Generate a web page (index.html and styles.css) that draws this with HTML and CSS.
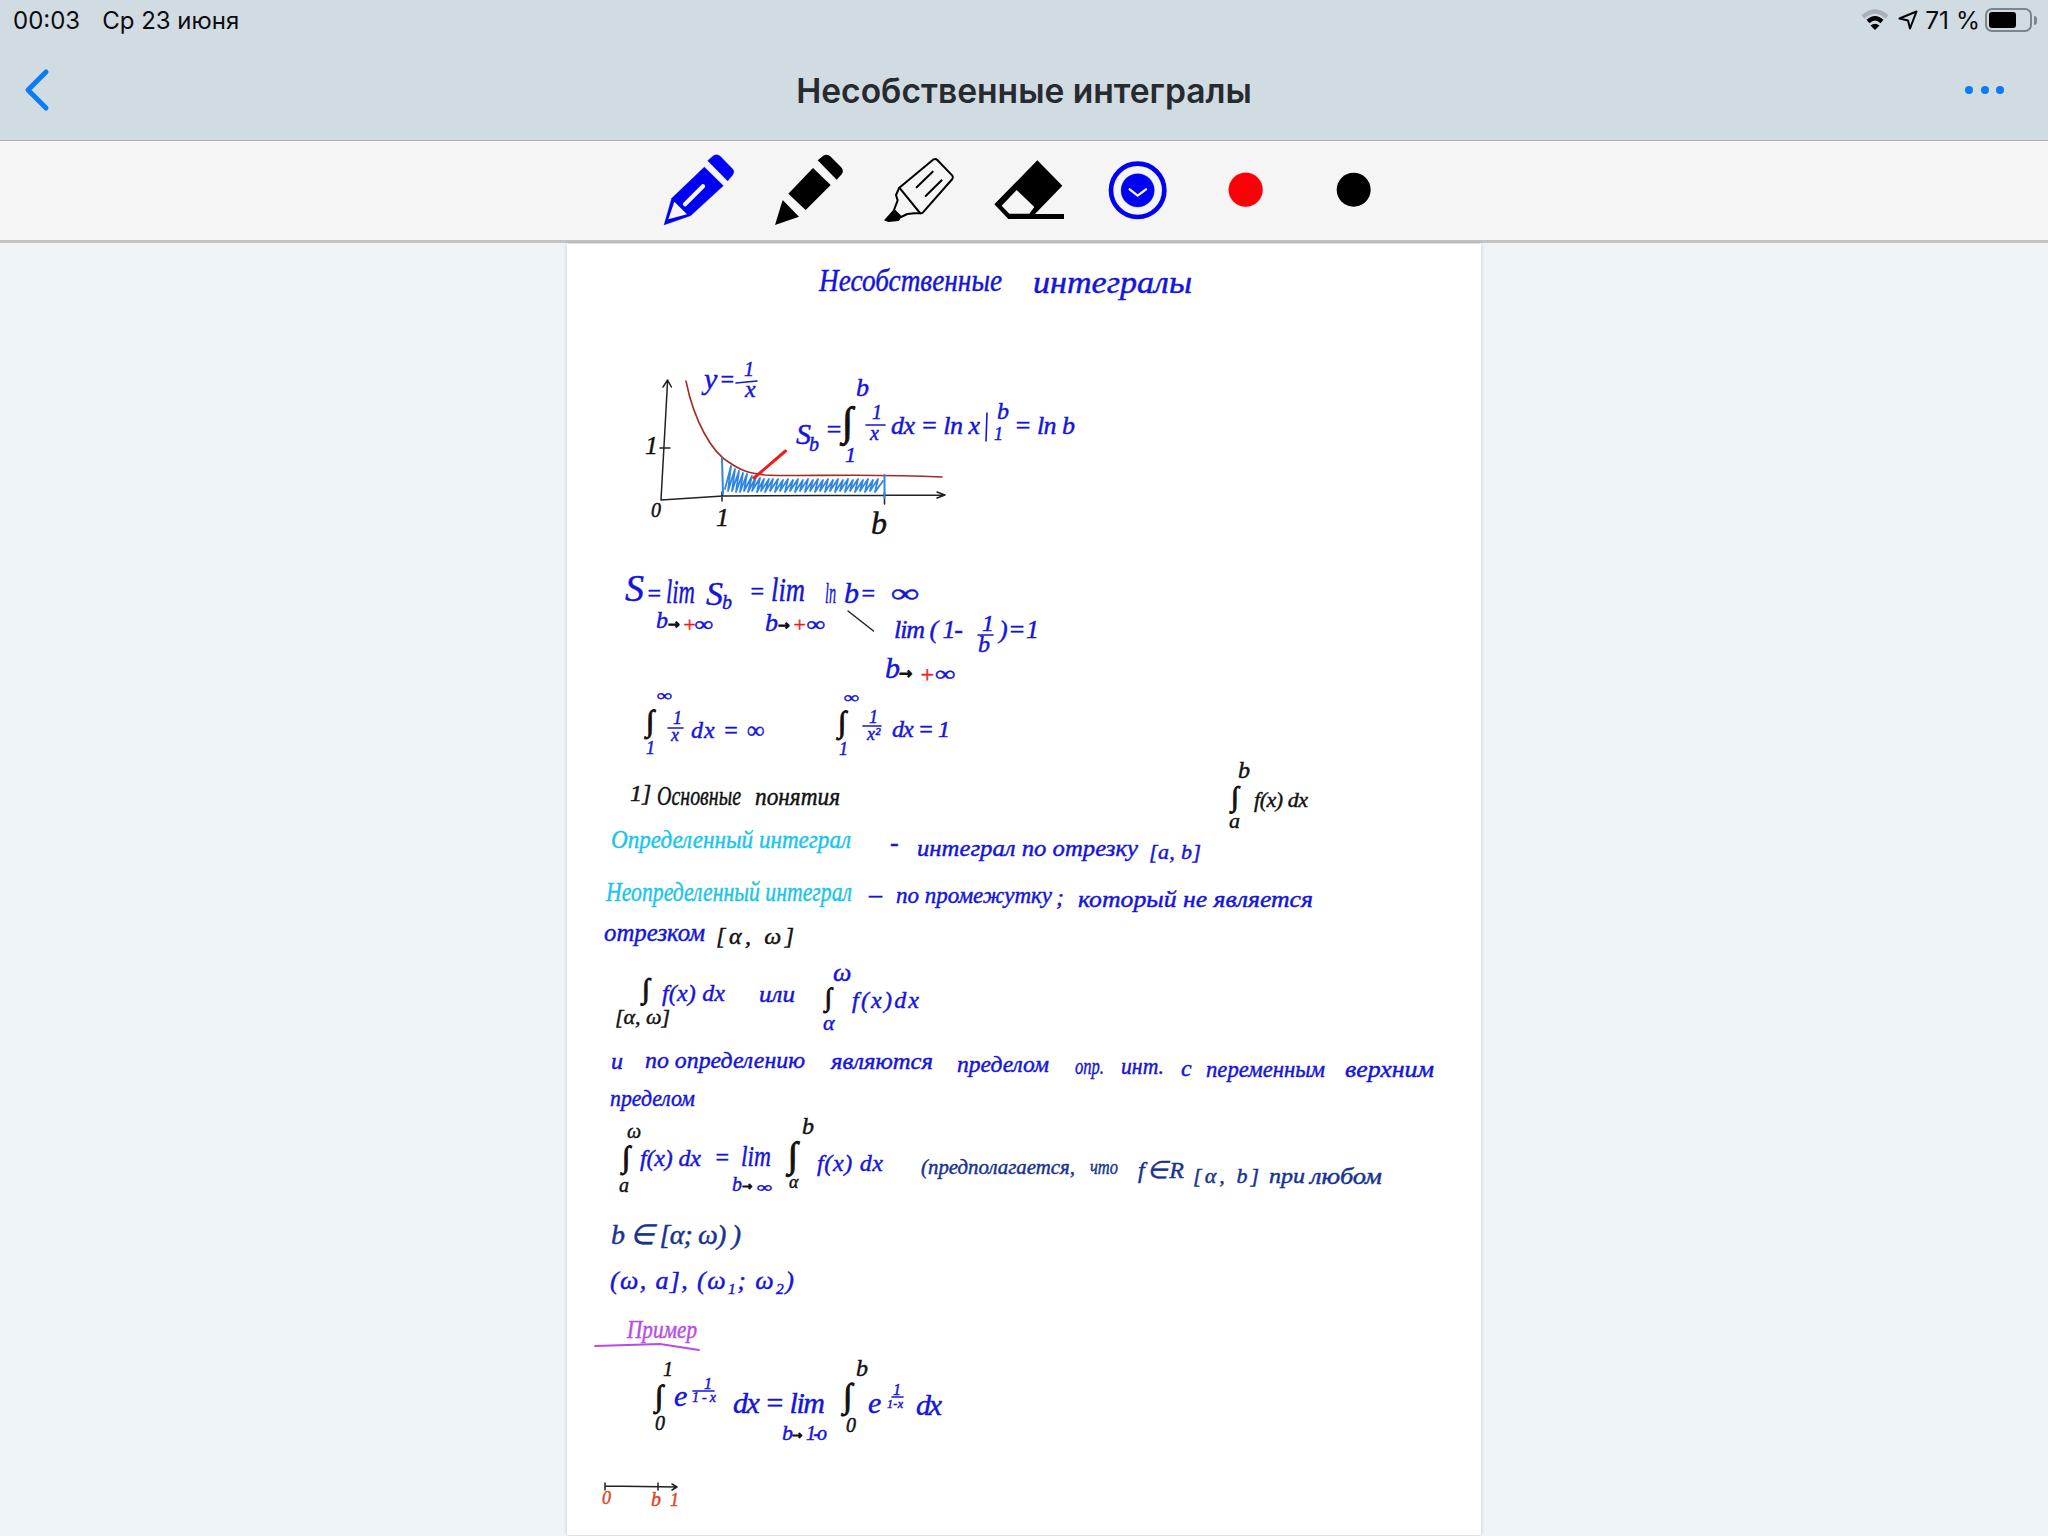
FILE: index.html
```html
<!DOCTYPE html>
<html lang="ru">
<head>
<meta charset="utf-8">
<title>Несобственные интегралы</title>
<link rel="stylesheet" href="styles.css">
</head>
<body>
<div class="app">
  <header class="top">
    <div class="status">
      <div class="status-left"><span>00:03</span><span>Ср 23 июня</span></div>
      <div class="status-right">
        <svg class="wifi" width="28" height="22" viewBox="0 0 28 22" aria-hidden="true">
          <path class="wifi-off" d="M2 8 Q14 -3 26 8"/>
          <path class="wifi-on" d="M7 12.5 Q14 6 21 12.5"/>
          <path class="wifi-dot" d="M14 21 L9.5 16.5 Q14 13 18.5 16.5 Z"/>
        </svg>
        <svg class="loc" width="20" height="20" viewBox="0 0 20 20" aria-hidden="true">
          <path d="M18.5 1.5 L1.5 8.5 L10 10.5 L12 18.5 Z"/>
        </svg>
        <span class="pct">71 %</span>
        <div class="battery"><div class="battery-level"></div></div>
        <div class="battery-nub"></div>
      </div>
    </div>
    <div class="nav">
      <svg class="back" width="28" height="44" viewBox="0 0 28 44" aria-hidden="true">
        <path d="M22 4 L4 22 L22 40"/>
      </svg>
      <h1 class="title">Несобственные интегралы</h1>
      <div class="more"><i></i><i></i><i></i></div>
    </div>
  </header>

  <div class="tools">
    <svg class="tool" viewBox="-9 0 324 270" aria-hidden="true">
      <path class="blue" d="M158 47 L175 32 Q185 26 195 33 L233 72 Q240 80 233 90 L218 108 Z"/>
      <path class="blue" d="M148 66 L205 122 L107 212 L27 240 L50 160 Z"/>
      <path class="hole" d="M58 170 L40 223 L96 208 Z"/>
      <path class="slot" d="M90 178 L144 124"/>
    </svg>
    <svg class="tool" viewBox="315 0 324 270" aria-hidden="true">
      <path d="M488 46 L505 32 Q515 26 525 33 L560 68 Q567 78 560 88 L545 104 Z"/>
      <path d="M474 69 L527 120 L452 195 L400 146 Z"/>
      <path d="M383 165 L432 215 L360 240 Z"/>
    </svg>
    <svg class="tool" viewBox="639 0 324 270" aria-hidden="true">
      <path class="line" d="M733 128 L836 43 Q842 40 847 45 L892 92 Q896 97 892 102 L804 202 Q800 206 795 204 Z"/>
      <path class="line" d="M733 128 L723 150 L728 166 L717 195 L738 216 L757 207 L778 205 L797 205"/>
      <path class="line" d="M785 127 L833 80 M812 153 L860 106"/>
      <path d="M715 194 L687 226 L700 231 L731 228 L740 216 Z"/>
    </svg>
    <svg class="tool" viewBox="-12 0 324 270" aria-hidden="true">
      <path fill-rule="evenodd" d="M172 46 L247 122 L165 207 H252 V222 H85 L43 178 Z M110 135 L163 186 L148 206 H88 L65 182 Z"/>
    </svg>
    <svg class="tool" viewBox="312 0 324 270" aria-hidden="true">
      <circle class="ring" cx="473" cy="136" r="80"/>
      <circle class="blue" cx="473" cy="136" r="50"/>
      <path class="chev" d="M449 133 L473 152 L498 133"/>
    </svg>
    <svg class="tool" viewBox="636 0 324 270" aria-hidden="true">
      <circle class="red" cx="797" cy="134" r="51"/>
    </svg>
    <svg class="tool" viewBox="960 0 324 270" aria-hidden="true">
      <circle cx="1121" cy="134" r="51"/>
    </svg>
  </div>

  <main class="desk">
    <article class="sheet">
      <svg class="ink" viewBox="567 243 914 1293">
        <!-- heading -->
        <text class="hw blue f32" x="819" y="290" textLength="183" lengthAdjust="spacingAndGlyphs">Несобственные</text>
        <text class="hw blue f32" x="1033" y="292" textLength="159" lengthAdjust="spacingAndGlyphs">интегралы</text>

        <!-- graph -->
        <polyline class="s hatch" points="725,488 731,465 728,490 735,468 732,490 739,470 736,491 743,472 740,491 747,473 744,490 752,475 748,491 756,476 752,490 760,477 757,491 764,478 761,490 769,478 765,491 773,478 770,490 778,478 775,491 783,479 780,490 788,478 785,491 793,479 790,490 798,478 795,491 803,479 800,490 808,478 805,491 813,479 810,490 818,478 815,491 823,479 820,490 828,478 825,491 833,479 830,490 838,478 835,491 843,479 840,490 848,478 845,491 853,479 850,490 858,478 855,491 863,479 860,490 868,478 865,491 873,479 870,490 878,478 875,491 883,480"/>
        <path class="s axis" d="M661 499 L667.6 380 M663 386 L667.6 379 L671.4 386 M661 499 L723 495 L945 494 M937 491 L945 494 L937 497 M660 447 H670 M722 491 V500 M884.5 491 V503"/>
        <path class="s curve" d="M686 380 C694 420 712 452 730 462 C745 472 752 472 765 474 C800 476 860 472 942 476"/>
        <path class="s edge" d="M722 457 L723 493 M884.5 474 V497"/>
        <path class="s arrow" d="M754 477 L785.5 450"/>

        <text class="hw blue f30" x="704" y="388">y</text>
        <text class="hw blue f24" x="719" y="386">=</text>
        <text class="hw blue f20" x="744" y="375">1</text>
        <path class="s pen" d="M736 382 L757 380"/>
        <text class="hw blue f24" x="745" y="396">x</text>
        <text class="hw black f26" x="645" y="453">1</text>
        <text class="hw black f20" x="651" y="516">0</text>
        <text class="hw black f26" x="716" y="525">1</text>
        <text class="hw black f32" x="871" y="533">b</text>

        <text class="hw blue f30" x="796" y="443">S</text>
        <text class="hw blue f20" x="809" y="450">b</text>
        <text class="hw blue f26" x="825" y="437">=</text>
        <text class="int black f40" x="842" y="434">∫</text>
        <text class="hw blue f26" x="856" y="395">b</text>
        <text class="hw blue f22" x="845" y="461">1</text>
        <text class="hw blue f20" x="872" y="418">1</text>
        <path class="s pen" d="M866 424 H885"/>
        <text class="hw blue f20" x="870" y="439">x</text>
        <text class="hw blue f26" x="891" y="433" textLength="89" lengthAdjust="spacing">dx = ln x</text>
        <path class="s pen" d="M987 412 L986 440"/>
        <text class="hw blue f24" x="997" y="418">b</text>
        <text class="hw blue f18" x="994" y="439">1</text>
        <text class="hw blue f26" x="1014" y="433" textLength="61" lengthAdjust="spacing">= ln b</text>

        <!-- limit -->
        <text class="hw blue f38" x="625" y="600">S</text>
        <text class="hw blue f24" x="646" y="600">=</text>
        <text class="hw blue f34" x="666" y="602" textLength="29" lengthAdjust="spacingAndGlyphs">lim</text>
        <text class="hw blue f34" x="706" y="604">S</text>
        <text class="hw blue f20" x="722" y="608">b</text>
        <text class="hw blue f24" x="749" y="598">=</text>
        <text class="hw blue f34" x="771" y="600" textLength="34" lengthAdjust="spacingAndGlyphs">lim</text>
        <text class="hw blue f30" x="825" y="602" textLength="11" lengthAdjust="spacingAndGlyphs">ln</text>
        <text class="hw blue f30" x="844" y="602">b</text>
        <text class="hw blue f24" x="860" y="600">=</text>
        <text class="hw blue f26" x="891" y="601" textLength="28" lengthAdjust="spacingAndGlyphs">∞</text>

        <text class="hw blue f24" x="656" y="627">b</text>
        <text class="arr black f14" x="668" y="628">→</text>
        <text class="hw red f22" x="682" y="631">+</text>
        <text class="hw blue f20" x="695" y="630" textLength="18" lengthAdjust="spacingAndGlyphs">∞</text>
        <text class="hw blue f26" x="765" y="630">b</text>
        <text class="arr black f14" x="778" y="629">→</text>
        <text class="hw red f22" x="792" y="631">+</text>
        <text class="hw blue f20" x="807" y="630" textLength="18" lengthAdjust="spacingAndGlyphs">∞</text>
        <path class="s black-pen" d="M848 610 L873.5 630"/>

        <text class="hw blue f26" x="894" y="637" textLength="69" lengthAdjust="spacing">lim ( 1-</text>
        <text class="hw blue f24" x="982" y="630">1</text>
        <path class="s pen" d="M978 634 H993"/>
        <text class="hw blue f24" x="978" y="651">b</text>
        <text class="hw blue f26" x="999" y="637" textLength="40" lengthAdjust="spacing">)=1</text>
        <text class="hw blue f30" x="885" y="677">b</text>
        <text class="arr black f16" x="899" y="678">→</text>
        <text class="hw red f24" x="919" y="681">+</text>
        <text class="hw blue f22" x="935" y="680" textLength="20" lengthAdjust="spacingAndGlyphs">∞</text>

        <!-- pair of integrals -->
        <text class="hw blue f16" x="657" y="700" textLength="15" lengthAdjust="spacingAndGlyphs">∞</text>
        <text class="int black f30" x="646" y="730">∫</text>
        <text class="hw blue f18" x="646" y="753">1</text>
        <text class="hw blue f18" x="673" y="723">1</text>
        <path class="s pen" d="M668 727 H683"/>
        <text class="hw blue f18" x="671" y="740">x</text>
        <text class="hw blue f24" x="691" y="737" textLength="73" lengthAdjust="spacing">dx = ∞</text>
        <text class="hw blue f16" x="844" y="702" textLength="15" lengthAdjust="spacingAndGlyphs">∞</text>
        <text class="int black f30" x="838" y="731">∫</text>
        <text class="hw blue f18" x="839" y="754">1</text>
        <text class="hw blue f18" x="869" y="722">1</text>
        <path class="s pen" d="M863 725 H881"/>
        <text class="hw blue f18" x="867" y="739">x²</text>
        <text class="hw blue f24" x="892" y="736" textLength="58" lengthAdjust="spacing">dx = 1</text>

        <!-- section -->
        <text class="hw black f24" x="630" y="800">1]</text>
        <text class="hw black f28" x="657" y="804" textLength="84" lengthAdjust="spacingAndGlyphs">Основные</text>
        <text class="hw black f26" x="755" y="804" textLength="85" lengthAdjust="spacingAndGlyphs">понятия</text>
        <text class="hw black f24" x="1238" y="777">b</text>
        <text class="int black f28" x="1231" y="805">∫</text>
        <text class="hw black f22" x="1229" y="827">a</text>
        <text class="hw black f22" x="1254" y="806" textLength="54" lengthAdjust="spacing">f(x) dx</text>

        <text class="hw cyan f26" x="611" y="847" textLength="240" lengthAdjust="spacingAndGlyphs">Определенный интеграл</text>
        <text class="hw blue f26" x="890" y="850">-</text>
        <text class="hw blue f24" x="917" y="855" textLength="221" lengthAdjust="spacingAndGlyphs">интеграл по отрезку</text>
        <text class="hw blue f22" x="1149" y="858" textLength="52" lengthAdjust="spacing">[a, b]</text>

        <text class="hw cyan f28" x="606" y="900" textLength="246" lengthAdjust="spacingAndGlyphs">Неопределенный интеграл</text>
        <text class="hw blue f26" x="869" y="902">–</text>
        <text class="hw blue f24" x="896" y="902" textLength="156" lengthAdjust="spacingAndGlyphs">по промежутку</text>
        <text class="hw blue f24" x="1056" y="904">;</text>
        <text class="hw blue f24" x="1078" y="906" textLength="235" lengthAdjust="spacingAndGlyphs">который не является</text>
        <text class="hw blue f26" x="604" y="940" textLength="101" lengthAdjust="spacingAndGlyphs">отрезком</text>
        <text class="hw black f24" x="716" y="943" textLength="78" lengthAdjust="spacing">[α, ω]</text>

        <text class="int black f28" x="642" y="997">∫</text>
        <text class="hw blue f24" x="662" y="1000" textLength="63" lengthAdjust="spacing">f(x) dx</text>
        <text class="hw black f22" x="615" y="1023" textLength="55" lengthAdjust="spacing">[α, ω]</text>
        <text class="hw blue f24" x="759" y="1001" textLength="36" lengthAdjust="spacingAndGlyphs">или</text>
        <text class="hw blue f26" x="833" y="980">ω</text>
        <text class="int black f26" x="825" y="1005">∫</text>
        <text class="hw blue f22" x="823" y="1029">α</text>
        <text class="hw blue f24" x="852" y="1007" textLength="67" lengthAdjust="spacing">f(x)dx</text>

        <text class="hw blue f24" x="611" y="1068">и</text>
        <text class="hw blue f24" x="645" y="1067" textLength="160" lengthAdjust="spacingAndGlyphs">по определению</text>
        <text class="hw blue f24" x="831" y="1068" textLength="102" lengthAdjust="spacingAndGlyphs">являются</text>
        <text class="hw blue f24" x="957" y="1071" textLength="92" lengthAdjust="spacingAndGlyphs">пределом</text>
        <text class="hw blue f24" x="1075" y="1073" textLength="29" lengthAdjust="spacingAndGlyphs">опр.</text>
        <text class="hw blue f24" x="1121" y="1073" textLength="43" lengthAdjust="spacingAndGlyphs">инт.</text>
        <text class="hw blue f24" x="1181" y="1075">с</text>
        <text class="hw blue f24" x="1206" y="1076" textLength="119" lengthAdjust="spacingAndGlyphs">переменным</text>
        <text class="hw blue f24" x="1345" y="1076" textLength="89" lengthAdjust="spacingAndGlyphs">верхним</text>
        <text class="hw blue f24" x="610" y="1105" textLength="85" lengthAdjust="spacingAndGlyphs">пределом</text>

        <!-- definition -->
        <text class="hw black f20" x="627" y="1137">ω</text>
        <text class="int black f30" x="622" y="1166">∫</text>
        <text class="hw black f20" x="619" y="1191">a</text>
        <text class="hw blue f24" x="640" y="1165" textLength="61" lengthAdjust="spacing">f(x) dx</text>
        <text class="hw blue f24" x="714" y="1164">=</text>
        <text class="hw blue f30" x="741" y="1165" textLength="30" lengthAdjust="spacingAndGlyphs">lim</text>
        <text class="hw blue f20" x="732" y="1190">b</text>
        <text class="arr black f12" x="742" y="1189">→</text>
        <text class="hw blue f14" x="757" y="1191" textLength="15" lengthAdjust="spacingAndGlyphs">∞</text>
        <text class="hw black f24" x="802" y="1133">b</text>
        <text class="int black f36" x="788" y="1166">∫</text>
        <text class="hw black f18" x="789" y="1187">α</text>
        <text class="hw blue f24" x="817" y="1170" textLength="66" lengthAdjust="spacing">f(x) dx</text>
        <text class="hw navy f22" x="921" y="1173" textLength="154" lengthAdjust="spacingAndGlyphs">(предполагается,</text>
        <text class="hw navy f22" x="1090" y="1173" textLength="28" lengthAdjust="spacingAndGlyphs">что</text>
        <text class="hw navy f24" x="1138" y="1177" textLength="46" lengthAdjust="spacing">f ∈ R</text>
        <text class="hw navy f22" x="1193" y="1182" textLength="66" lengthAdjust="spacing">[α, b]</text>
        <text class="hw navy f22" x="1269" y="1182" textLength="36" lengthAdjust="spacingAndGlyphs">при</text>
        <text class="hw navy f24" x="1310" y="1183" textLength="72" lengthAdjust="spacingAndGlyphs">любом</text>

        <text class="hw navy f28" x="611" y="1243" textLength="130" lengthAdjust="spacing">b ∈ [α; ω) )</text>
        <text class="hw blue f26" x="610" y="1288" textLength="184" lengthAdjust="spacing">(ω, a], (ω₁; ω₂)</text>

        <text class="hw purple f26" x="627" y="1337" textLength="70" lengthAdjust="spacingAndGlyphs">Пример</text>
        <path class="s purple-pen" d="M595 1345 L660 1343 L699 1349"/>

        <!-- example -->
        <text class="hw black f20" x="663" y="1375">1</text>
        <text class="int black f30" x="655" y="1405">∫</text>
        <text class="hw black f20" x="655" y="1429">0</text>
        <text class="hw blue f30" x="674" y="1405">e</text>
        <text class="hw blue f16" x="704" y="1388">1</text>
        <path class="s pen" d="M693 1390 H714"/>
        <text class="hw blue f14" x="692" y="1401" textLength="24" lengthAdjust="spacing">1-x</text>
        <text class="hw blue f30" x="733" y="1412" textLength="92" lengthAdjust="spacing">dx = lim</text>
        <text class="hw blue f22" x="782" y="1439">b</text>
        <text class="arr black f12" x="792" y="1438">→</text>
        <text class="hw blue f20" x="806" y="1439" textLength="21" lengthAdjust="spacing">1-о</text>
        <text class="hw black f24" x="856" y="1375">b</text>
        <text class="int black f34" x="843" y="1406">∫</text>
        <text class="hw black f20" x="846" y="1431">0</text>
        <text class="hw blue f30" x="868" y="1412">e</text>
        <text class="hw blue f16" x="893" y="1394">1</text>
        <path class="s pen" d="M892 1396 H903"/>
        <text class="hw blue f12" x="887" y="1407" textLength="16" lengthAdjust="spacing">1-x</text>
        <text class="hw blue f30" x="916" y="1414" textLength="26" lengthAdjust="spacing">dx</text>

        <path class="s axis" d="M605 1485 L677 1486 M672 1483 L677 1486 L672 1489 M605 1482 V1489 M658 1482 V1489"/>
        <text class="hw orange f18" x="602" y="1503">0</text>
        <text class="hw orange f20" x="651" y="1505">b</text>
        <text class="hw orange f18" x="670" y="1505">1</text>
      </svg>
    </article>
  </main>
</div>
</body>
</html>
```
FILE: styles.css
```css
* { box-sizing: border-box; }
html, body { margin: 0; height: 100%; }
body {
  font-family: Inter, "Liberation Sans", sans-serif;
  background: #eff4f8;
  overflow: hidden;
}
.app { display: flex; flex-direction: column; height: 1536px; }

.top {
  height: 141px;
  background: #d1dbe2;
  border-bottom: 1px solid #acb2b5;
  flex: none;
}
.status {
  height: 40px;
  display: flex;
  justify-content: space-between;
  align-items: center;
  font-size: 24px;
  color: #0b0d0e;
  padding: 0 11px 0 13px;
}
.status-left { display: flex; gap: 22px; }
.status-right { display: flex; align-items: center; }
.wifi { margin-right: 9px; fill: none; }
.wifi-off { stroke: #aab0b4; stroke-width: 4.5; fill: none; }
.wifi-on { stroke: #000; stroke-width: 4.5; fill: none; }
.wifi-dot { fill: #000; }
.loc { margin-right: 7px; fill: none; stroke: #000; stroke-width: 2; stroke-linejoin: round; }
.pct { margin-right: 5px; font-size: 24.5px; }
.battery {
  width: 47px;
  height: 24px;
  border: 2px solid #7c858b;
  border-radius: 7px;
  padding: 2px;
}
.battery-level { width: 27px; height: 16px; background: #000; border-radius: 3px; }
.battery-nub { width: 3px; height: 9px; margin-left: 2px; background: #7c858b; border-radius: 0 3px 3px 0; }

.nav {
  height: 100px;
  display: grid;
  grid-template-columns: 1fr auto 1fr;
  align-items: center;
}
.back { margin-left: 24px; fill: none; stroke: #0a7cf6; stroke-width: 5; stroke-linecap: round; stroke-linejoin: round; }
.title {
  margin: 0;
  font-size: 33.6px;
  font-weight: 600;
  color: #272b2f;
  white-space: nowrap;
}
.more { display: flex; justify-content: flex-end; gap: 7.5px; margin-right: 44px; }
.more i { width: 8px; height: 8px; border-radius: 50%; background: #0a7cf6; display: block; }

.tools {
  height: 102px;
  flex: none;
  display: flex;
  justify-content: center;
  align-items: center;
  padding: 0 0 1px 12px;
  background: #f5f5f5;
  border-bottom: 3px solid #c2c2c2;
}
.tool { width: 108px; height: 90px; flex: none; fill: #000; }
.tool .blue { fill: #0000f5; }
.tool .red { fill: #fb0007; }
.hole { fill: #f5f5f5; }
.slot { fill: none; stroke: #f5f5f5; stroke-width: 13; stroke-linecap: round; }
.line { fill: none; stroke: #000; stroke-width: 6; stroke-linejoin: round; stroke-linecap: round; }
.ring { fill: none; stroke: #0000f5; stroke-width: 14; }
.chev { fill: none; stroke: #f5f5f5; stroke-width: 7; stroke-linecap: round; stroke-linejoin: round; }

.desk { flex: 1; display: flex; justify-content: center; align-items: flex-start; padding-top: 1px; }
.sheet {
  width: 914px;
  height: 1291px;
  background: #fff;
  box-shadow: 0 0 4px rgba(0, 0, 0, .18);
}
.ink { display: block; width: 914px; height: 1293px; }

.hw { font-family: "Liberation Serif", serif; font-style: italic; stroke-width: .45; paint-order: stroke; }
.int { font-family: "Liberation Serif", serif; font-style: italic; }
.arr { font-family: "DejaVu Sans", sans-serif; }
.blue { fill: #1414dc; stroke: #1414dc; }
.black { fill: #111; stroke: #111; }
.cyan { fill: #1cc4ea; stroke: #1cc4ea; }
.navy { fill: #17328f; stroke: #17328f; }
.purple { fill: #b84be4; stroke: #b84be4; }
.red { fill: #ef1c24; stroke: #ef1c24; }
.orange { fill: #e2451f; stroke: #e2451f; }

.f12 { font-size: 12px; } .f14 { font-size: 14px; } .f16 { font-size: 16px; }
.f18 { font-size: 18px; } .f20 { font-size: 20px; } .f22 { font-size: 22px; }
.f24 { font-size: 24px; } .f26 { font-size: 26px; } .f28 { font-size: 28px; }
.f30 { font-size: 30px; } .f32 { font-size: 32px; } .f34 { font-size: 34px; }
.f36 { font-size: 36px; } .f38 { font-size: 38px; } .f40 { font-size: 40px; }

.s { fill: none; stroke-linecap: round; stroke-linejoin: round; }
.hatch { stroke: #2e86e2; stroke-width: 1.8; }
.axis { stroke: #222; stroke-width: 1.5; }
.curve { stroke: #a42c22; stroke-width: 1.6; }
.edge { stroke: #2e86e2; stroke-width: 2; }
.arrow { stroke: #ee1c1c; stroke-width: 3; }
.pen { stroke: #1414dc; stroke-width: 1.6; }
.black-pen { stroke: #222; stroke-width: 1.5; }
.purple-pen { stroke: #b84be4; stroke-width: 1.8; }
```
